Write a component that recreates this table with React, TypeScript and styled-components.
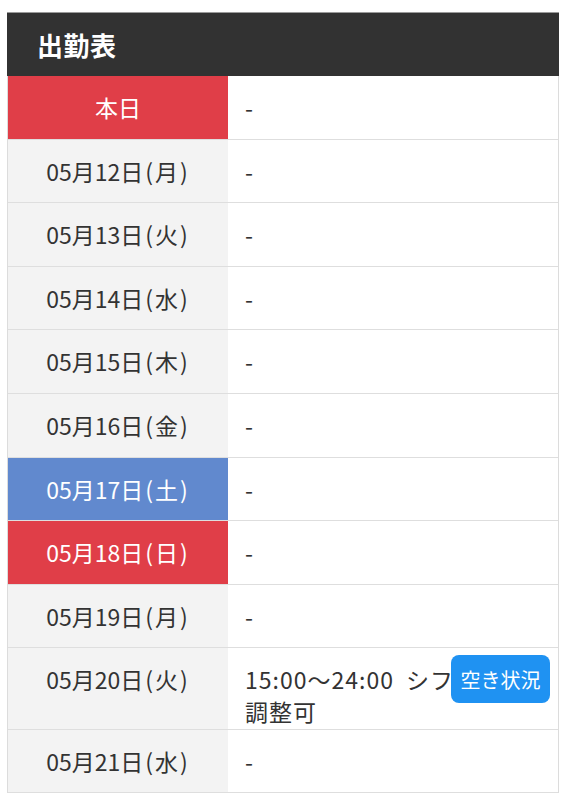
import React from "react";
import styled, { createGlobalStyle, css } from "styled-components";

const GlobalStyle = createGlobalStyle`
  html, body { margin: 0; padding: 0; background: #ffffff; }
  body {
    font-family: "Noto Sans CJK JP", sans-serif;
    color: #333333;
  }
`;

type Variant = "normal" | "today" | "sat" | "sun";

const Page = styled.div`
  padding: 12px 9px 0 7px;
`;

const Header = styled.h2`
  margin: 0;
  height: 64px;
  box-sizing: border-box;
  border-top: 1px solid #9a9a9a;
  background: #323232;
  color: #ffffff;
  display: flex;
  align-items: center;
  padding-left: 30px;
  font-family: "Noto Sans CJK JP", sans-serif;
  font-size: 26px;
  font-weight: 700;
  letter-spacing: 0.5px;
`;

const Table = styled.div`
  border-left: 1px solid #dcdcdc;
  border-right: 1px solid #dcdcdc;
  display: grid;
  grid-template-columns: 220px 1fr;
`;

const variantColors: Record<Variant, { bg: string; fg: string }> = {
  normal: { bg: "#f3f3f3", fg: "#333333" },
  today: { bg: "#e03e48", fg: "#ffffff" },
  sat: { bg: "#6189ce", fg: "#ffffff" },
  sun: { bg: "#e03e48", fg: "#ffffff" },
};

const DateCell = styled.div<{ $variant: Variant }>`
  box-sizing: border-box;
  padding: 16px 0 15px;
  line-height: 31.6px;
  font-size: 23px;
  text-align: center;
  border-bottom: 1px solid #dedede;
  ${({ $variant }) => css`
    background: ${variantColors[$variant].bg};
    color: ${variantColors[$variant].fg};
  `}
`;

const Paren = styled.span`
  padding: 0 2px;
`;

const InfoCell = styled.div`
  position: relative;
  box-sizing: border-box;
  padding: 16px 17px 1px 17px;
  line-height: 31.6px;
  font-size: 23px;
  color: #333333;
  background: #ffffff;
  border-bottom: 1px solid #dedede;
`;

const InfoText = styled.div<{ $wrapWidth?: number }>`
  ${({ $wrapWidth }) =>
    $wrapWidth !== undefined &&
    css`
      max-width: ${$wrapWidth}px;
      letter-spacing: 1px;
      word-spacing: 6px;
    `}
`;

const StatusButton = styled.button`
  position: absolute;
  top: 7px;
  right: 8px;
  width: 99px;
  height: 48px;
  border: none;
  border-radius: 8px;
  background: #1f92f2;
  color: #ffffff;
  font-family: "Noto Sans CJK JP", sans-serif;
  font-size: 20px;
  padding: 0;
  cursor: pointer;
`;

type Row = { date?: string; dow?: string; variant: Variant; info?: string; button?: boolean };

const rows: Row[] = [
  { variant: "today" },
  { date: "05月12日", dow: "月", variant: "normal" },
  { date: "05月13日", dow: "火", variant: "normal" },
  { date: "05月14日", dow: "水", variant: "normal" },
  { date: "05月15日", dow: "木", variant: "normal" },
  { date: "05月16日", dow: "金", variant: "normal" },
  { date: "05月17日", dow: "土", variant: "sat" },
  { date: "05月18日", dow: "日", variant: "sun" },
  { date: "05月19日", dow: "月", variant: "normal" },
  { date: "05月20日", dow: "火", variant: "normal", info: "15:00〜24:00 シフト調整可", button: true },
  { date: "05月21日", dow: "水", variant: "normal" },
];

export default function App() {
  return (
    <>
      <GlobalStyle />
      <Page>
        <Header>出勤表</Header>
        <Table>
          {rows.map((r, i) => (
            <React.Fragment key={i}>
              <DateCell $variant={r.variant}>
                {r.date ? (
                  <>
                    {r.date}
                    <Paren>(</Paren>
                    {r.dow}
                    <Paren>)</Paren>
                  </>
                ) : (
                  "本日"
                )}
              </DateCell>
              <InfoCell>
                <InfoText $wrapWidth={r.button ? 248 : undefined}>{r.info ?? "-"}</InfoText>
                {r.button && <StatusButton>空き状況</StatusButton>}
              </InfoCell>
            </React.Fragment>
          ))}
        </Table>
      </Page>
    </>
  );
}
